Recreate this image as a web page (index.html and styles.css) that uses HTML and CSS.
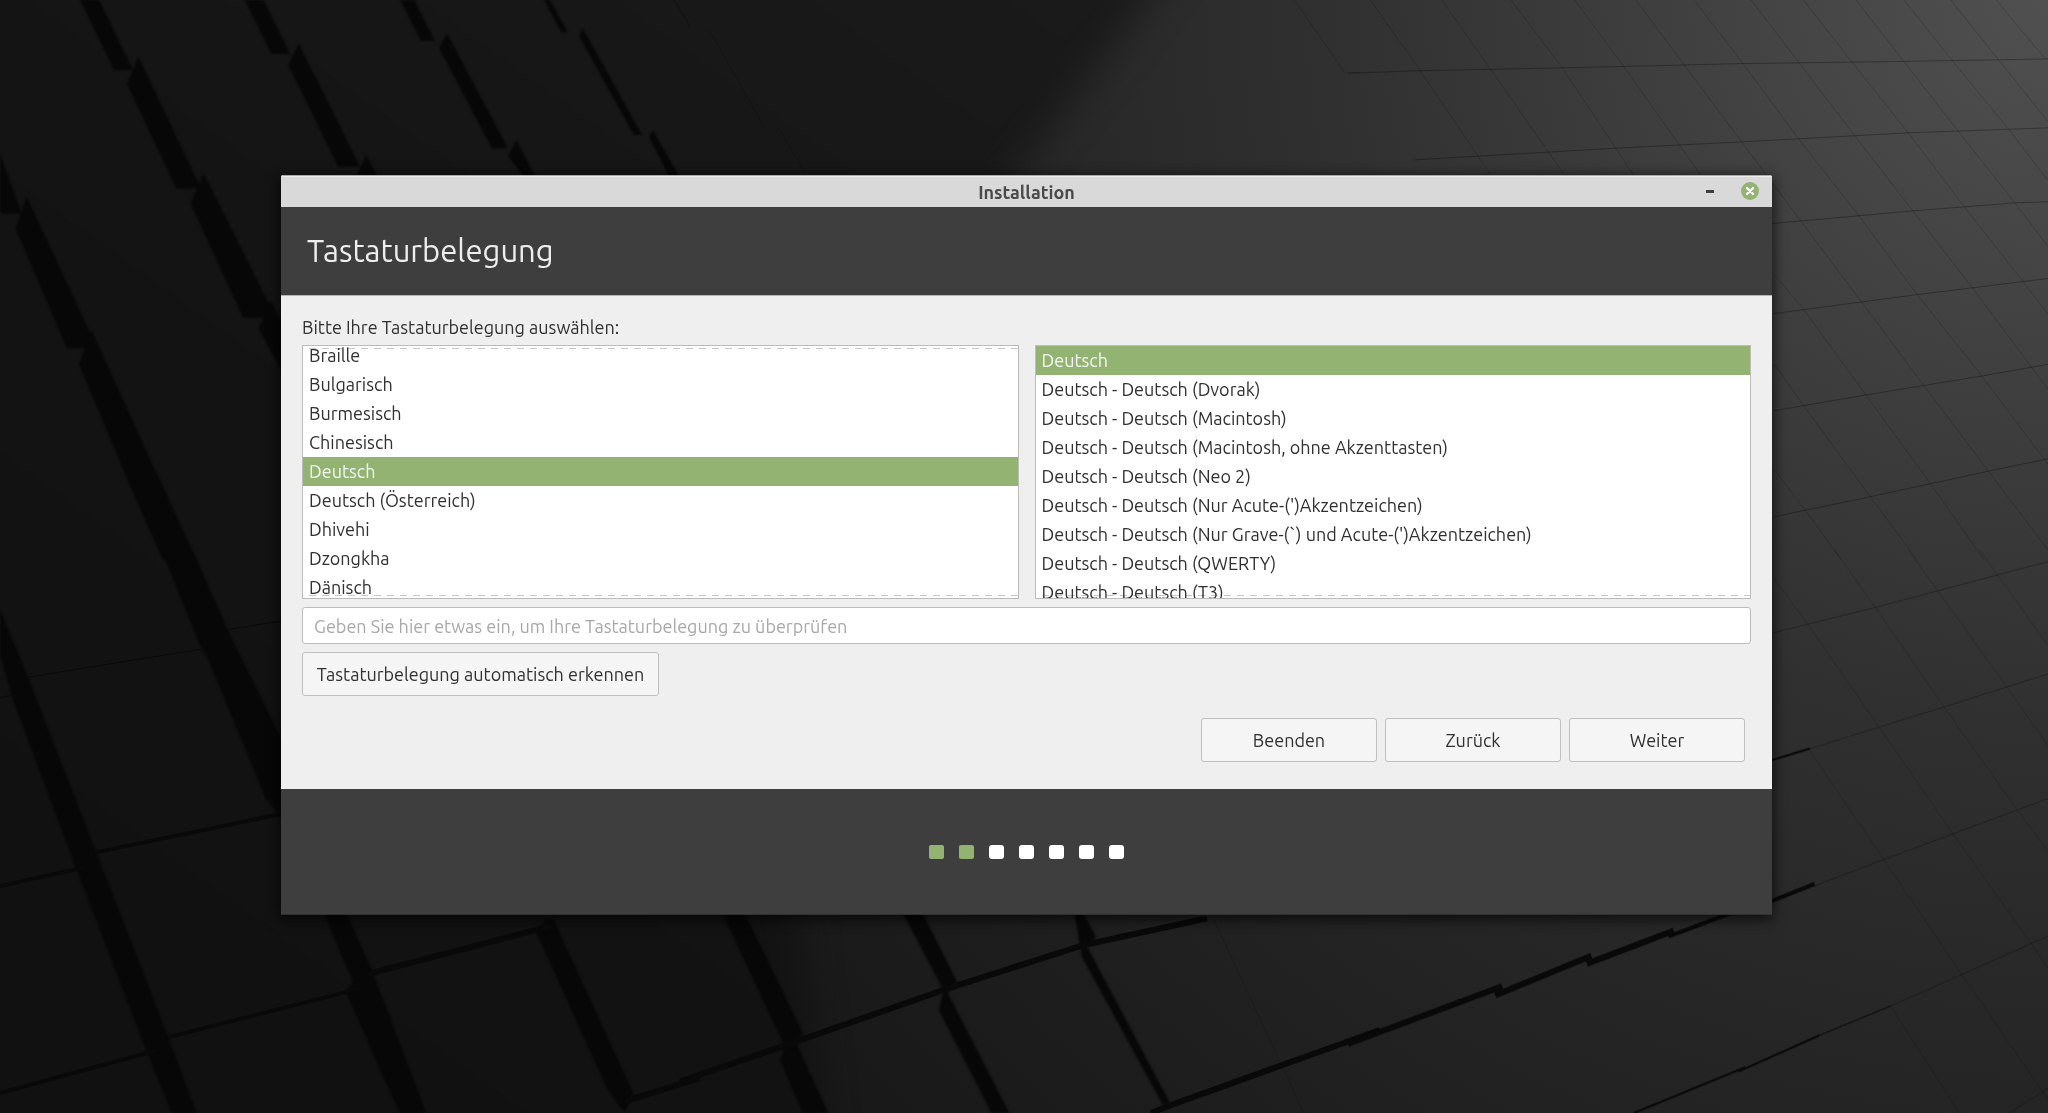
FILE: index.html
```html
<!DOCTYPE html>
<html lang="de">
<head>
<meta charset="utf-8">
<meta name="viewport" content="width=device-width, initial-scale=1">
<title>Installation</title>
<link rel="stylesheet" href="styles.css">
</head>
<body>
<svg class="wallpaper" viewBox="0 0 2048 1113" preserveAspectRatio="xMidYMid slice" aria-hidden="true">
  <defs>
    <radialGradient id="light" gradientUnits="userSpaceOnUse" cx="2048" cy="0" r="1750">
      <stop offset="0" stop-color="#505050"/>
      <stop offset=".17" stop-color="#434343"/>
      <stop offset=".32" stop-color="#373737"/>
      <stop offset=".41" stop-color="#303030"/>
      <stop offset=".62" stop-color="#252525"/>
      <stop offset=".8" stop-color="#1d1d1d"/>
      <stop offset="1" stop-color="#161616"/>
    </radialGradient>
    <linearGradient id="shade" gradientUnits="userSpaceOnUse" x1="1100" y1="0" x2="300" y2="1113">
      <stop offset="0" stop-color="#1a1a1a"/>
      <stop offset=".5" stop-color="#141414"/>
      <stop offset="1" stop-color="#111"/>
    </linearGradient>
    <filter id="soft" x="-10%" y="-10%" width="120%" height="120%" color-interpolation-filters="sRGB"><feGaussianBlur stdDeviation="18"/></filter>
    <filter id="edge" color-interpolation-filters="sRGB"><feGaussianBlur stdDeviation="1"/></filter>
  </defs>
  <rect width="2048" height="1113" fill="url(#light)"/>
  <path d="M-90-90H1215L1010 180 760 600 830 1210H-90Z" fill="url(#shade)" filter="url(#soft)"/>

  <!-- raised blocks: gaps between them -->
  <g class="gap" filter="url(#edge)">
    <g transform="scale(.4464 .3571)">
      <path d="M180 0H222L298 196H255ZM548 0H590L650 151H608ZM897 0H928L974 115H943ZM1219 0H1232L1272 90H1257Z"/>
      <path d="M310 158L450 528H395L285 235ZM669 121L806 466H758L646 183ZM1001 93L1138 416H1102L984 135ZM1306 80L1438 378H1420L1297 100Z"/>
      <path d="M820 432L845 492H800ZM1157 392L1198 492H1172L1138 437ZM1463 367L1520 492H1498L1455 385Z"/>
      <path d="M60 552L205 940V975H150L35 640ZM205 925L352 1330V1385H300L177 1020ZM352 1325L440 1568H365L300 1385ZM0 430L48 598H5L0 590Z"/>
      <path d="M456 485L606 860V890H545L427 570ZM606 842L640 920V1060L580 920Z"/>
    </g>
    <g transform="translate(0 550) scale(.4464 .3591)">
      <path d="M360-4H430L510 222 640 550V760L595 690 465 300 450 270Z"/>
      <path d="M0 165L62 352 215 840 375 1350 440 1568H385L330 1400 175 900 30 420 0 290Z"/>
      <path d="M725 1010H776L833 1170 955 1568H895L775 1230 790 1200ZM1200 1060L1225 1030H1240L1418 1510 1400 1568 1360 1500Z"/>
    </g>
    <g transform="translate(680 780) scale(.4464 .3333)">
      <path d="M95 400H145L275 760 260 790 332 999H275L225 840 235 800ZM500 400H544L620 605 600 640 738 999H698L580 690 590 630Z"/>
      <path d="M884 400H903L932 470 912 500 1098 970 1082 975 900 530Z"/>
    </g>
    <path d="M653 131L678 175H670L649 137Z"/>
  </g>

  <!-- seams between the rows of blocks -->
  <g class="seam">
    <g transform="translate(0 550) scale(.4464 .3591)">
      <path class="w1" d="M62 354L490 268M0 410L40 402M508 222L628 198"/>
      <path class="w4" d="M215 842L628 735M0 936L195 882M375 1357L810 1220M0 1512L355 1392"/>
      <path class="w6" d="M825 1180L1240 1045M1400 1535L1568 1470"/>
    </g>
    <g transform="translate(680 780) scale(.4464 .3333)">
      <path class="w6" d="M0 905L260 785 600 625 905 495 1180 415M1055 999L1100 975 1568 750"/>
    </g>
    <g transform="translate(1348 550) scale(.4464 .3591)">
      <path class="w6" d="M0 1375L345 1215M330 1240L545 1130M535 1152L730 1060"/>
      <path class="w4" d="M718 1076L860 1010M950 977L1045 930"/>
      <path class="w2" d="M950 585L1035 553M640 1568L890 1440M875 1452L1055 1352"/>
      <path class="w1" d="M1055 1352L1215 1270"/>
    </g>
  </g>

  <!-- flat floor grid -->
  <g class="grid">
    <g transform="translate(1348 0) scale(.4464 .3571)">
      <path class="row" d="M0 205L160 198 480 190 885 178 1245 172 1568 165M145 448L600 415 885 397 1255 372 1568 358M950 626L1270 590 1495 568 1568 565M955 878L1275 825 1568 780M955 1150L1160 1106 1420 1053 1568 1020M955 1447L1170 1391 1440 1318 1568 1285"/>
      <path d="M50 0L160 195 320 490M210 0L320 195 485 490M365 0L480 190 640 490M508 0L620 190 790 490M645 0L755 185 1015 620 1150 845 1290 1080 1435 1320 1568 1540M775 0L885 178 1010 390 1145 605 1275 825 1420 1053 1568 1300M903 0L1010 175 1135 380 1265 590 1400 808 1568 1090M1020 0L1130 175 1255 372 1380 578 1510 785 1568 880M1138 0L1245 172 1370 372 1495 570 1568 690M1245 0L1355 172 1480 362 1568 505M1350 0L1568 340M1452 0L1562 165M955 770L1020 865 1160 1106 1305 1355 1425 1568M955 1020L1020 1135 1170 1391 1275 1568M955 1315L1025 1430 1105 1568"/>
    </g>
    <g transform="translate(1348 550) scale(.4464 .3591)">
      <path class="row" d="M955 230L1180 160 1568 32M1035 553L1335 437 1568 345M1045 935L1200 862 1568 692M1215 1270L1375 1182 1568 1075M1480 1568L1568 1500"/>
      <path d="M1090 0L1180 158 1335 437 1500 725 1568 840M1255 0L1320 112 1475 380 1568 545M1415 0L1568 265M955 80L1030 207 1188 490 1355 790 1530 1095 1568 1165M1035 560L1200 862 1375 1182 1568 1530M1215 1270L1370 1568"/>
    </g>
    <g transform="translate(640 0) scale(.4592 .3333)">
      <path d="M75 0L110 80M150 88L270 380M300 380L360 520M1425 0L1535 218H1568"/>
    </g>
    <path d="M1213 918L1304 1113M674 0L690 27"/>
  </g>
</svg>

<div class="desktop">
  <main class="window">
    <header class="titlebar">
      <span class="titlebar-name">Installation</span>
      <div class="titlebar-buttons">
        <button class="win-btn" type="button" aria-label="Minimieren">
          <svg width="18" height="18" viewBox="0 0 18 18" aria-hidden="true"><rect x="5" y="8" width="8" height="3" fill="#404040"/></svg>
        </button>
        <button class="win-btn" type="button" aria-label="Schließen">
          <svg width="18" height="18" viewBox="0 0 18 18" aria-hidden="true"><circle cx="9" cy="9" r="9" fill="#92b372"/><path d="M6 6l6 6M12 6l-6 6" stroke="#fff" stroke-width="2.4" stroke-linecap="round"/></svg>
        </button>
      </div>
    </header>

    <div class="banner"><h1>Tastaturbelegung</h1></div>

    <form class="content" onsubmit="return false">
      <p class="prompt" id="prompt">Bitte Ihre Tastaturbelegung auswählen:</p>

      <div class="lists">
        <div class="list-box more-above more-below">
          <ul class="list scrolled" role="listbox" aria-labelledby="prompt">
            <li role="option">Braille</li>
            <li role="option">Bulgarisch</li>
            <li role="option">Burmesisch</li>
            <li role="option">Chinesisch</li>
            <li role="option" aria-selected="true">Deutsch</li>
            <li role="option">Deutsch (Österreich)</li>
            <li role="option">Dhivehi</li>
            <li role="option">Dzongkha</li>
            <li role="option">Dänisch</li>
          </ul>
        </div>
        <div class="list-box more-below">
          <ul class="list" role="listbox" aria-label="Variante">
            <li role="option" aria-selected="true">Deutsch</li>
            <li role="option">Deutsch - Deutsch (Dvorak)</li>
            <li role="option">Deutsch - Deutsch (Macintosh)</li>
            <li role="option">Deutsch - Deutsch (Macintosh, ohne Akzenttasten)</li>
            <li role="option">Deutsch - Deutsch (Neo 2)</li>
            <li role="option">Deutsch - Deutsch (Nur Acute-(')Akzentzeichen)</li>
            <li role="option">Deutsch - Deutsch (Nur Grave-(`) und Acute-(')Akzentzeichen)</li>
            <li role="option">Deutsch - Deutsch (QWERTY)</li>
            <li role="option">Deutsch - Deutsch (T3)</li>
          </ul>
        </div>
      </div>

      <input class="entry" type="text" aria-label="Tastaturbelegung überprüfen" placeholder="Geben Sie hier etwas ein, um Ihre Tastaturbelegung zu überprüfen">
      <button class="btn detect" type="button">Tastaturbelegung automatisch erkennen</button>

      <div class="actions">
        <button class="btn" type="button">Beenden</button>
        <button class="btn" type="button">Zurück</button>
        <button class="btn" type="submit">Weiter</button>
      </div>
    </form>

    <footer class="steps">
      <ol class="dots" aria-label="Schritt 2 von 7">
        <li class="done"></li><li class="done"></li><li></li><li></li><li></li><li></li><li></li>
      </ol>
    </footer>
  </main>
</div>
</body>
</html>
```
FILE: styles.css
```css
* { box-sizing: border-box; }

body {
  margin: 0;
  background: #141414;
  color: #303030;
  font-family: Ubuntu, "Noto Sans", sans-serif;
  font-size: 18px;
  line-height: 20px;
}

button, input { font: inherit; color: inherit; }
h1, p, ul, ol { margin: 0; padding: 0; }
ul, ol { list-style: none; }

/* Wallpaper */
.wallpaper {
  position: fixed;
  inset: 0;
  width: 100%;
  height: 100%;
}
.gap { fill: #070707; }
.seam path, .grid path { fill: none; vector-effect: non-scaling-stroke; }
.seam path { stroke: #090909; }
.seam .w1 { stroke-width: 1px; }
.seam .w2 { stroke-width: 2px; }
.seam .w4 { stroke-width: 4px; }
.seam .w6 { stroke-width: 6px; }
.grid path { stroke: rgba(0, 0, 0, .17); stroke-width: 1px; }
.grid .row { stroke: rgba(0, 0, 0, .3); }

/* Window */
.desktop {
  position: relative;
  min-height: 100vh;
  padding: 175px 276px 0 281px;
  overflow: hidden;
}
.window {
  border-radius: 3px 3px 0 0;
  box-shadow: 0 3px 14px 1px rgba(0, 0, 0, .7);
  background: #efefef;
  overflow: hidden;
}

.titlebar {
  display: grid;
  grid-template-columns: 1fr auto 1fr;
  align-items: center;
  height: 32px;
  padding: 0 13px;
  background: #d9d9d9;
  box-shadow: inset 0 1px #a8a8a8, inset 0 2px #ececec;
}
.titlebar-name { grid-column: 2; padding-top: 2px; color: #4a4a4a; font-weight: 700; }
.titlebar-buttons { display: flex; justify-content: flex-end; gap: 22px; }
.win-btn {
  width: 18px;
  height: 18px;
  padding: 0;
  border: 0;
  background: none;
}
.win-btn svg { display: block; }

.banner {
  display: flex;
  align-items: center;
  height: 88px;
  padding: 0 26px;
  background: #3e3e3e;
  color: #eee;
}
.banner h1 { font-size: 31px; line-height: 36px; font-weight: 400; }

.content {
  display: flex;
  flex-direction: column;
  gap: 8px;
  padding: 21px 21px 27px;
  border-top: 1px solid #b4b4b4;
}

/* Lists */
.lists { display: grid; grid-template-columns: 1fr 1fr; gap: 16px; }
.list-box {
  position: relative;
  height: 254px;
  border: 1px solid #bcbcbc;
  background: #fff;
  overflow: hidden;
}
.list { position: relative; z-index: 1; }
.list.scrolled { margin-top: -5px; }
.list li {
  height: 29px;
  padding: 0 6px;
  line-height: 29px;
  white-space: nowrap;
}
.list li[aria-selected="true"] { background: #92b372; color: #f4f7f0; }

/* Dashed hints that the list scrolls further */
.more-above::before,
.more-below::after {
  content: "";
  position: absolute;
  left: 0;
  right: 0;
  height: 1px;
  background: repeating-linear-gradient(90deg, #fff 0 6px, #c8c8c8 6px 13px);
}
.more-above::before { top: 2px; }
.more-below::after { bottom: 2px; }

/* Controls */
.entry {
  width: 100%;
  height: 37px;
  padding: 0 11px;
  border: 1px solid #bcbcbc;
  border-radius: 3px;
  background: #fff;
}
.entry::placeholder { color: #a8a8a8; opacity: 1; }
.btn {
  width: 176px;
  height: 44px;
  padding: 0;
  border: 1px solid #bfbfbf;
  border-radius: 3px;
  background: #f5f5f5;
}
.btn.detect { width: 357px; }
.actions {
  display: flex;
  justify-content: flex-end;
  gap: 8px;
  padding: 14px 6px 0 0;
}

/* Progress */
.steps {
  display: flex;
  align-items: center;
  justify-content: center;
  height: 126px;
  background: #3e3e3e;
  box-shadow: inset 0 -1px #303030;
}
.dots { display: flex; gap: 15px; }
.dots li { width: 15px; height: 14px; border-radius: 3px; background: #fff; }
.dots .done { background: #92b372; border-radius: 2px; }
```
